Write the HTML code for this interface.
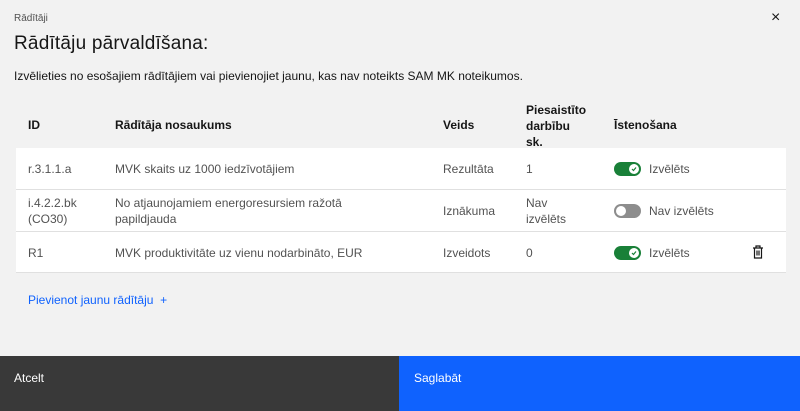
<!DOCTYPE html>
<html><head><style>
body{margin:0;width:800px;height:411px;background:#f2f2f2;font-family:"Liberation Sans",sans-serif;color:#161616;position:relative;overflow:hidden}
.a{position:absolute;white-space:nowrap}
.row{position:absolute;left:16px;width:770px;background:#fff;border-bottom:1px solid #e0e0e0}
.t{font-size:12px;color:#525252;position:absolute}
.h{font-size:12px;font-weight:bold;position:absolute;color:#161616}
.tg{position:absolute;width:27px;height:14px;border-radius:7px}
.tg i{position:absolute;top:2px;width:10px;height:10px;border-radius:50%;background:#fff}
</style></head><body>
<div class="a" style="left:14px;top:13px;font-size:10px;color:#525252">Rādītāji</div>
<div class="a" style="left:14px;top:33px;font-size:19px;letter-spacing:0.2px">Rādītāju pārvaldīšana:</div>
<div class="a" style="left:14px;top:69px;font-size:12px">Izvēlieties no esošajiem rādītājiem vai pievienojiet jaunu, kas nav noteikts SAM MK noteikumos.</div>
<div class="a" style="left:771px;top:9px;font-size:16px">×</div>
<div class="h" style="left:28px;top:118px">ID</div>
<div class="h" style="left:115px;top:118px">Rādītāja nosaukums</div>
<div class="h" style="left:443px;top:118px">Veids</div>
<div class="h" style="left:526px;top:102px;line-height:16px">Piesaistīto<br>darbību<br>sk.</div>
<div class="h" style="left:614px;top:118px">Īstenošana</div>
<div class="row" style="top:148px;height:41px">
<div class="t" style="left:12px;top:14px">r.3.1.1.a</div>
<div class="t" style="left:99px;top:14px">MVK skaits uz 1000 iedzīvotājiem</div>
<div class="t" style="left:427px;top:14px">Rezultāta</div>
<div class="t" style="left:510px;top:14px">1</div>
<div class="tg" style="left:598px;top:14px;background:#198038"><i style="left:15px"></i><svg style="position:absolute;left:17px;top:4px" width="6" height="6" viewBox="0 0 6 6"><path d="M1 3l1.5 1.5L5 1.5" stroke="#198038" stroke-width="1.2" fill="none"/></svg></div>
<div class="t" style="left:633px;top:14px">Izvēlēts</div>
</div>
<div class="row" style="top:190px;height:41px">
<div class="t" style="left:12px;top:5px;line-height:16px">i.4.2.2.bk<br>(CO30)</div>
<div class="t" style="left:99px;top:5px;line-height:16px">No atjaunojamiem energoresursiem ražotā<br>papildjauda</div>
<div class="t" style="left:427px;top:14px">Iznākuma</div>
<div class="t" style="left:510px;top:5px;line-height:16px">Nav<br>izvēlēts</div>
<div class="tg" style="left:598px;top:14px;background:#8d8d8d"><i style="left:2px"></i></div>
<div class="t" style="left:633px;top:14px">Nav izvēlēts</div>
</div>
<div class="row" style="top:232px;height:40px">
<div class="t" style="left:12px;top:14px">R1</div>
<div class="t" style="left:99px;top:14px">MVK produktivitāte uz vienu nodarbināto, EUR</div>
<div class="t" style="left:427px;top:14px">Izveidots</div>
<div class="t" style="left:510px;top:14px">0</div>
<div class="tg" style="left:598px;top:14px;background:#198038"><i style="left:15px"></i><svg style="position:absolute;left:17px;top:4px" width="6" height="6" viewBox="0 0 6 6"><path d="M1 3l1.5 1.5L5 1.5" stroke="#198038" stroke-width="1.2" fill="none"/></svg></div>
<div class="t" style="left:633px;top:14px">Izvēlēts</div>
<svg style="position:absolute;left:736px;top:13px" width="12" height="14" viewBox="0 0 12 14" fill="none" stroke="#161616" stroke-width="1.2"><path d="M1 3h10M4 3V1h4v2M2.5 3v10h7V3M5 5.5v5M7 5.5v5"/></svg>
</div>
<div class="a" style="left:28px;top:293px;font-size:12px;color:#0f62fe">Pievienot jaunu rādītāju &nbsp;+</div>
<div style="position:absolute;left:0;top:356px;width:399px;height:55px;background:#393939"></div>
<div style="position:absolute;left:399px;top:356px;width:401px;height:55px;background:#0f62fe"></div>
<div class="a" style="left:14px;top:371px;font-size:12px;color:#fff">Atcelt</div>
<div class="a" style="left:414px;top:371px;font-size:12px;color:#fff">Saglabāt</div>
</body></html>
